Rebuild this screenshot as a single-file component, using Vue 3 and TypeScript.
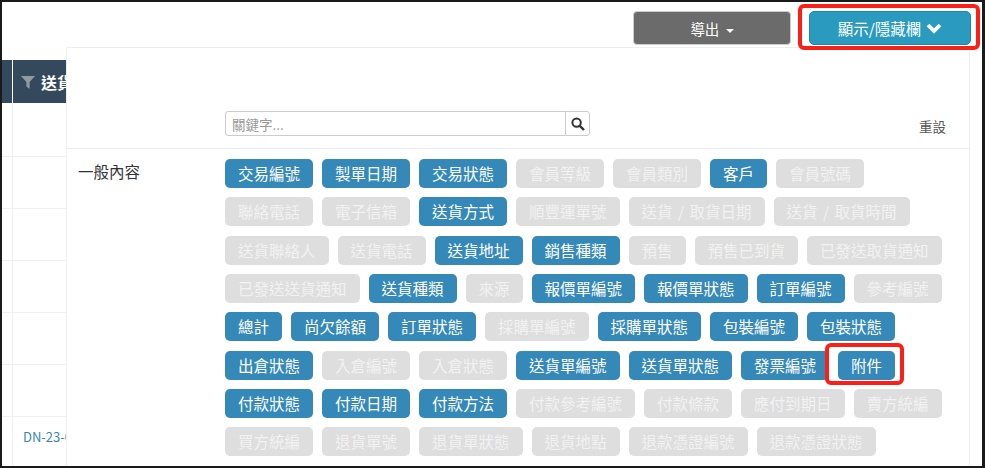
<script setup lang="ts">
interface Field {
  name: string
  on: boolean
  marked?: boolean
}

const on = (name: string, marked = false): Field => ({ name, on: true, marked })
const off = (name: string): Field => ({ name, on: false })

const fields: Field[] = [
  on('交易編號'), on('製單日期'), on('交易狀態'), off('會員等級'), off('會員類別'), on('客戶'), off('會員號碼'),
  off('聯絡電話'), off('電子信箱'), on('送貨方式'), off('順豐運單號'), off('送貨 / 取貨日期'), off('送貨 / 取貨時間'),
  off('送貨聯絡人'), off('送貨電話'), on('送貨地址'), on('銷售種類'), off('預售'), off('預售已到貨'), off('已發送取貨通知'),
  off('已發送送貨通知'), on('送貨種類'), off('來源'), on('報價單編號'), on('報價單狀態'), on('訂單編號'), off('參考編號'),
  on('總計'), on('尚欠餘額'), on('訂單狀態'), off('採購單編號'), on('採購單狀態'), on('包裝編號'), on('包裝狀態'),
  on('出倉狀態'), off('入倉編號'), off('入倉狀態'), on('送貨單編號'), on('送貨單狀態'), on('發票編號'), on('附件', true),
  on('付款狀態'), on('付款日期'), on('付款方法'), off('付款參考編號'), off('付款條款'), off('應付到期日'), off('賣方統編'),
  off('買方統編'), off('退貨單號'), off('退貨單狀態'), off('退貨地點'), off('退款憑證編號'), off('退款憑證狀態'),
]

const rows = ['', '', '', '', '', '', 'DN-23-0001']
</script>

<template>
  <div class="page">
    <div class="toolbar">
      <button type="button" class="btn-export">導出 <span class="caret"></span></button>
      <div class="callout">
        <button type="button" class="btn-columns">
          顯示/隱藏欄
          <svg class="chevron" viewBox="0 0 16 12" width="16" height="12">
            <path d="M2 3 L8 9 L14 3" fill="none" stroke="#fff" stroke-width="3.8" />
          </svg>
        </button>
      </div>
    </div>

    <div class="table">
      <div class="thead">
        <div class="th-first"></div>
        <div class="th">
          <svg class="filter" viewBox="0 0 14 14" width="14" height="14">
            <path d="M0 1 H14 L8.6 7 V14 L5.4 11.5 V7 Z" fill="#8f9aa3" />
          </svg>
          送貨單編號
        </div>
      </div>
      <div v-for="(row, i) in rows" :key="i" class="tr">
        <div class="td-first"></div>
        <div class="td"><a class="link">{{ row }}</a></div>
      </div>
    </div>

    <div class="panel">
      <div class="panel-search">
        <div class="search">
          <input class="search-input" type="text" placeholder="關鍵字..." />
          <button type="button" class="search-btn">
            <svg viewBox="0 0 14 14" width="14" height="14">
              <circle cx="5.6" cy="5.6" r="4.2" fill="none" stroke="#333" stroke-width="2" />
              <path d="M8.8 8.8 L13 13" stroke="#333" stroke-width="2.4" />
            </svg>
          </button>
        </div>
        <span class="reset">重設</span>
      </div>
      <div class="group">
        <div class="group-name">一般內容</div>
        <div class="chips">
          <span
            v-for="f in fields"
            :key="f.name"
            class="chip"
            :class="{ 'chip-on': f.on, 'chip-marked': f.marked }"
          >{{ f.name }}</span>
        </div>
      </div>
    </div>
  </div>
</template>

<style>
html,
body {
  margin: 0;
  background: #1a1a1a;
}
</style>

<style scoped>
.page {
  position: relative;
  box-sizing: border-box;
  width: 985px;
  height: 468px;
  overflow: hidden;
  border: solid #1a1a1a;
  border-width: 2px 3px 2px 2px;
  background: #fff;
  font-family: "Noto Sans CJK TC", "Noto Sans", sans-serif;
  color: #333;
}

.toolbar {
  display: flex;
  justify-content: flex-end;
  align-items: flex-start;
  box-sizing: border-box;
  height: 45px;
  padding-top: 9px;
}

.btn-export {
  box-sizing: border-box;
  width: 158px;
  height: 34px;
  padding: 0;
  border: 1px solid #ccc;
  border-radius: 4px;
  background: #6b6b6b;
  color: #fff;
  font: inherit;
  font-size: 14.5px;
}

.caret {
  display: inline-block;
  margin-left: 3px;
  vertical-align: middle;
  border-top: 4px solid #fff;
  border-left: 4px solid transparent;
  border-right: 4px solid transparent;
}

.callout {
  position: relative;
  z-index: 2;
  box-sizing: border-box;
  width: 182px;
  height: 46px;
  margin: -7px 2px 0 7px;
  padding: 3px 0 0 7px;
  border: 4px solid #fb1f16;
  border-radius: 6px;
}

.btn-columns {
  display: flex;
  align-items: center;
  justify-content: center;
  gap: 5px;
  box-sizing: border-box;
  width: 162px;
  height: 34px;
  padding: 0;
  border: 1px solid #1f87a8;
  border-radius: 5px;
  background: #2a9bbf;
  color: #fff;
  font: inherit;
  font-size: 15.5px;
}

.table {
  width: 200px;
  margin-top: 13px;
}

.thead {
  display: flex;
  height: 43px;
  color: #fff;
  font-size: 16px;
  font-weight: 700;
  background: #34495c;
}

.th-first {
  width: 10px;
  border-right: 1px solid #fff;
}

.th {
  display: flex;
  align-items: center;
  gap: 6px;
  padding-left: 8px;
  white-space: nowrap;
}

.tr {
  display: flex;
  box-sizing: border-box;
  height: 52px;
  border-bottom: 1px solid #f0f0f0;
}

.thead + .tr {
  height: 54px;
}

.td-first {
  width: 10px;
  border-right: 1px solid #f0f0f0;
}

.td {
  padding: 6px 0 0 10px;
}

.link {
  color: #3a84bd;
  font-size: 13px;
  white-space: nowrap;
}

.panel {
  position: absolute;
  top: 45px;
  left: 64px;
  right: 12px;
  bottom: -20px;
  background: #fff;
  border-top: 1px solid #eee;
  border-left: 1px solid #eee;
  border-right: 1px solid #eee;
}

.panel-search {
  display: flex;
  align-items: flex-end;
  justify-content: space-between;
  box-sizing: border-box;
  height: 101px;
  padding: 0 23px 12px 158px;
  border-bottom: 1px solid #ececec;
}

.search {
  display: flex;
}

.search-input {
  box-sizing: border-box;
  width: 341px;
  height: 25px;
  padding: 0 6px;
  border: 1px solid #ccc;
  border-radius: 3px 0 0 3px;
  font: inherit;
  font-size: 13.5px;
  outline: none;
}

.search-input::placeholder {
  color: #999;
}

.search-btn {
  display: flex;
  align-items: center;
  justify-content: center;
  box-sizing: border-box;
  width: 25px;
  height: 25px;
  margin-left: -1px;
  padding: 0;
  border: 1px solid #ccc;
  border-radius: 0 3px 3px 0;
  background: #fff;
}

.reset {
  font-size: 13.5px;
  color: #555;
}

.group {
  display: flex;
  padding-top: 10px;
}

.group-name {
  box-sizing: border-box;
  width: 158px;
  padding-left: 11px;
  font-size: 15.5px;
  line-height: 24px;
  color: #333;
}

.chips {
  display: flex;
  flex-wrap: wrap;
  gap: 9.33px 9px;
  width: 725px;
}

.chip {
  position: relative;
  box-sizing: border-box;
  height: 29px;
  padding: 0 13px;
  border-radius: 5px;
  background: #dedede;
  color: #f2f2f2;
  font-size: 15.5px;
  line-height: 29px;
  word-spacing: 2px;
  white-space: nowrap;
}

.chip-on {
  background: #3589b9;
  color: #fff;
}

.chip-marked::after {
  content: "";
  position: absolute;
  inset: -8px -9px -5px -13px;
  border: 4px solid #fb1f16;
  border-radius: 6px;
}
</style>
